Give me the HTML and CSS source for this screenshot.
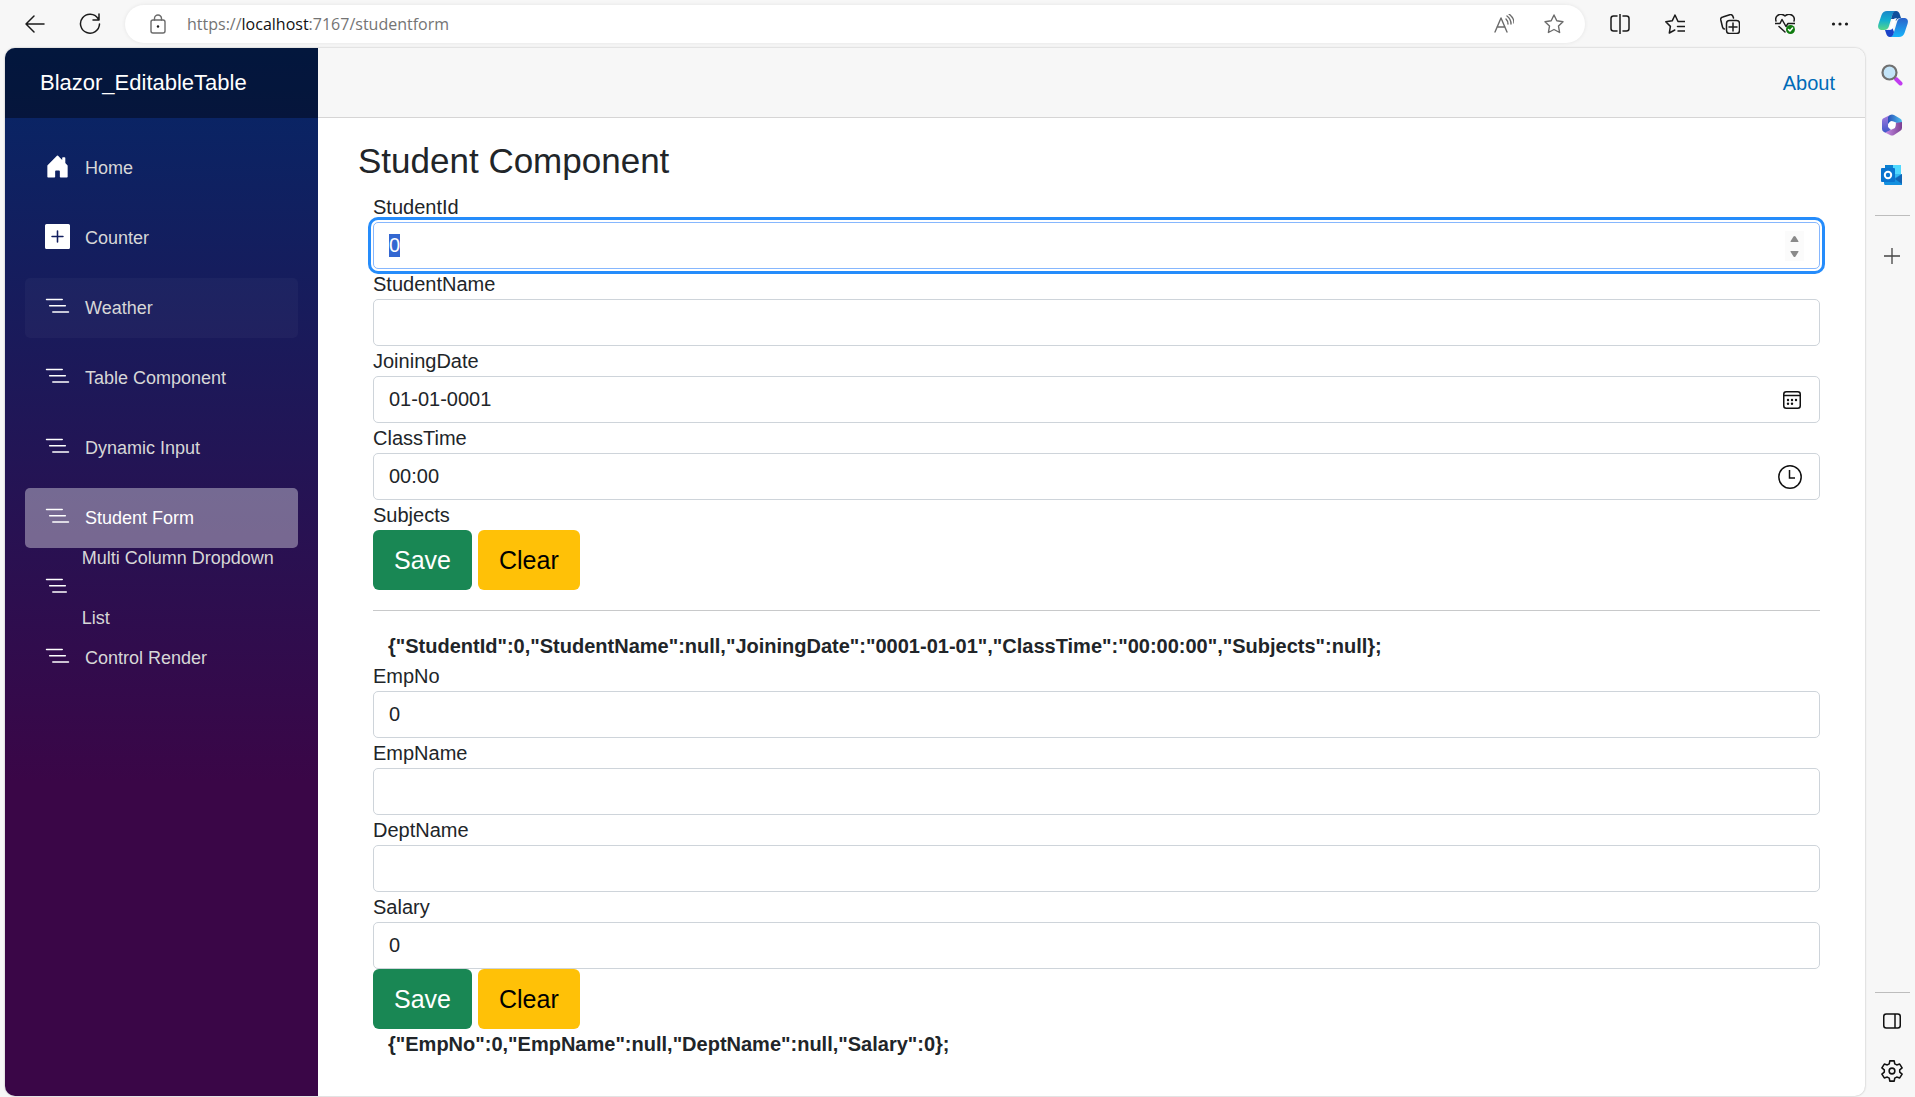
FILE: index.html
```html
<!DOCTYPE html>
<html lang="en">
<head>
<meta charset="utf-8">
<title>Student Form</title>
<link rel="stylesheet" href="styles.css">
</head>
<body>
<svg class="defs" aria-hidden="true">
  <symbol id="i-list" viewBox="0 0 16 16" preserveAspectRatio="xMinYMid slice"><path d="M4.500 11.500A.5.5 0 0 1 5 11h10a.5.5 0 0 1 0 1H5a.5.5 0 0 1-.5-.5zm-2-4A.5.5 0 0 1 3 7h10a.5.5 0 0 1 0 1H3a.5.5 0 0 1-.5-.5zm-2-4A.5.5 0 0 1 1 3h10a.5.5 0 0 1 0 1H1a.5.5 0 0 1-.5-.5z"/></symbol>
</svg>
<div class="browser">
  <header class="toolbar">
    <div class="tool-start">
      <button class="tool" aria-label="Back"><svg width="22" height="20" viewBox="0 0 22 20"><path d="M20 10H2M10 2L2 10l8 8"/></svg></button>
      <button class="tool" aria-label="Refresh"><svg width="22" height="22" viewBox="0 0 22 22"><path d="M19 5.500A9.500 9.500 0 1 0 20.500 11M20 1v6h-6"/></svg></button>
    </div>
    <div class="address">
      <svg class="lock" width="18" height="20" viewBox="0 0 18 20"><rect x="2" y="6" width="14" height="13" rx="2"/><path d="M5.500 6V4.500a3.500 3.500 0 0 1 7 0V6"/><circle cx="9" cy="12.500" r="1.200" class="solid"/></svg>
      <div class="url">https://<span class="host">localhost</span>:7167/studentform</div>
      <button class="tool muted" aria-label="Read aloud"><svg width="20" height="20" viewBox="0 0 20 20"><path d="M1 18L7 4l6 14M3 13h8M12 5q2 2 2 5M13 2q4 3 4 8M15 0q5 4 5 9"/></svg></button>
      <button class="tool muted" aria-label="Add to favorites"><svg width="20" height="20" viewBox="0 0 20 20"><path d="M10 1l2.800 5.800 6.200 .9-4.500 4.400 1.100 6.400L10 15.500l-5.600 3 1.100-6.400L1 7.700l6.200-.9z"/></svg></button>
    </div>
    <nav class="tool-end" aria-label="Browser tools">
      <button class="tool" aria-label="Split screen"><svg width="20" height="20" viewBox="0 0 20 20"><path d="M7 2H3.500Q1 2 1 4.500v10Q1 17 3.500 17H7M13 2h3.500Q19 2 19 4.500v10Q19 17 16.500 17H13M10 0v20"/></svg></button>
      <button class="tool" aria-label="Favorites"><svg width="20" height="20" viewBox="0 0 20 20"><path d="M13 7.500L10 1 7.200 6.800 .8 7.800l4.600 4.600L4.300 19l5.500-3M13 7.500h7M12.500 12.500H20M13 17h7"/></svg></button>
      <button class="tool" aria-label="Collections"><svg width="20" height="20" viewBox="0 0 20 20"><rect x="6.500" y="6.500" width="13" height="13" rx="3"/><path d="M13 9v8M9 13h8M4.500 15Q3 15 2.500 13L.8 6Q.3 3.500 2.800 3l7-2.300Q12.500 0 13.500 4"/></svg></button>
      <button class="tool" aria-label="Browser essentials"><svg width="20" height="20" viewBox="0 0 20 20"><path d="M1 7Q0 4 2 2q4-3.500 8 0 4-3.500 8 0 2 2 1 5M0 9.500h5l2-4 4 7 2-3h7M4 12.500l6 5.500"/><circle cx="15.500" cy="15.500" r="4.500" class="ok"/><path class="tick" d="M13.500 15.500l1.500 1.500 2.500-3"/></svg></button>
      <button class="tool" aria-label="Settings and more"><svg width="20" height="20" viewBox="0 0 20 20"><g class="solid"><circle cx="3.500" cy="10" r="1.600"/><circle cx="10" cy="10" r="1.600"/><circle cx="16.500" cy="10" r="1.600"/></g></svg></button>
    </nav>
    <button class="copilot" aria-label="Copilot"><svg width="30" height="28" viewBox="0 0 30 28">
      <defs>
        <linearGradient id="ca" x2="0" y2="1"><stop offset="0" stop-color="#1a86c8"/><stop offset=".5" stop-color="#14b0cf"/><stop offset="1" stop-color="#58d787"/></linearGradient>
        <linearGradient id="cb" x2="0" y2="1"><stop offset="0" stop-color="#2b62c9"/><stop offset="1" stop-color="#18b4fb"/></linearGradient>
      </defs>
      <path fill="url(#cb)" d="M21 27H12q3-1 4-5l3-10q1-4 5-4h3q4 1 2.500 6l-3 9q-1.500 4-5.500 4z"/>
      <path fill="#1a43c8" d="M7 20h3q3 0 4-3l2 5q-1 5-4 5-3 0-4-4z"/>
      <path fill="url(#ca)" d="M9 1h9q-3 1-4 5l-3 10q-1 4-5 4H3q-4-1-2.500-6l3-9Q5 1 9 1z"/>
      <path fill="#0f4f9c" d="M18 1q3 0 4 4l1 3q-4 0-5 3l-2-2h-3l1-3q1-5 4-5z"/>
      <path fill="#fff" d="M15 10q1-2 4-2-1 1-2 4l-2 6q-1 2-4 2 .5-1 1-3z"/>
    </svg></button>
  </header>

  <div class="workspace">
    <div class="page">
      <div class="sidebar">
        <div class="brand-row"><a class="brand" href="#">Blazor_EditableTable</a></div>
        <nav class="menu">
          <a class="item" href="#"><svg class="bi" viewBox="0 0 16 16"><path d="M6.500 14.500v-3.505c0-.245.25-.495.5-.495h2c.25 0 .5.25.5.5v3.500a.5.5 0 0 0 .5.5h4a.5.5 0 0 0 .5-.5v-7a.5.5 0 0 0-.146-.354L13 5.793V2.500a.5.5 0 0 0-.5-.5h-1a.5.5 0 0 0-.5.5v1.293L8.354 1.146a.5.5 0 0 0-.708 0l-6 6A.5.5 0 0 0 1.500 7.500v7a.5.5 0 0 0 .5.5h4a.5.5 0 0 0 .5-.5Z"/></svg>Home</a>
          <a class="item" href="#"><svg class="bi" viewBox="0 0 16 16"><path d="M1 0a1 1 0 0 0-1 1v14a1 1 0 0 0 1 1h14a1 1 0 0 0 1-1V1a1 1 0 0 0-1-1H1zm7.500 4.500v3h3a.5.5 0 0 1 0 1h-3v3a.5.5 0 0 1-1 0v-3h-3a.5.5 0 0 1 0-1h3v-3a.5.5 0 0 1 1 0z"/></svg>Counter</a>
          <a class="item hovered" href="#"><svg class="bi"><use href="#i-list"/></svg>Weather</a>
          <a class="item" href="#"><svg class="bi"><use href="#i-list"/></svg>Table Component</a>
          <a class="item" href="#"><svg class="bi"><use href="#i-list"/></svg>Dynamic Input</a>
          <a class="item active" href="#" aria-current="page"><svg class="bi"><use href="#i-list"/></svg>Student Form</a>
          <a class="item" href="#"><svg class="bi"><use href="#i-list"/></svg>Multi Column Dropdown List</a>
          <a class="item" href="#"><svg class="bi"><use href="#i-list"/></svg>Control Render</a>
        </nav>
      </div>
      <main class="main">
        <div class="top-row"><a class="about" href="#">About</a></div>
        <article class="content">
          <h3 class="title">Student Component</h3>
          <div class="forms">
            <form class="form">
              <label for="student-id">StudentId</label>
              <div class="field"><input class="control" id="student-id" type="number" value="0" autofocus>
                <svg class="spin" width="19" height="30" viewBox="0 0 19 30" aria-hidden="true"><path d="M5.500 11q0-1 .5-1.500l2.500-4q1-1 2 0l2.500 4q.5 .5 .5 1.500zM5.500 20h8q0 1-.5 1.500l-2.500 4q-1 1-2 0L6 21.500q-.5-.5-.5-1.500z"/></svg></div>
              <label for="student-name">StudentName</label>
              <div class="field"><input class="control" id="student-name" type="text"></div>
              <label for="joining-date">JoiningDate</label>
              <div class="field"><input class="control" id="joining-date" type="text" value="01-01-0001">
                <button class="picker" type="button" aria-label="Choose date"><svg width="18" height="18" viewBox="0 0 18 18"><rect x=".75" y=".75" width="16.500" height="16.500" rx="2.500"/><path d="M1 4.500h16"/><g class="solid"><circle cx="5" cy="9" r="1.200"/><circle cx="9" cy="9" r="1.200"/><circle cx="13" cy="9" r="1.200"/><circle cx="5" cy="12.700" r="1.200"/><circle cx="9" cy="12.700" r="1.200"/></g></svg></button></div>
              <label for="class-time">ClassTime</label>
              <div class="field"><input class="control" id="class-time" type="text" value="00:00">
                <button class="picker clock" type="button" aria-label="Choose time"><svg width="24" height="24" viewBox="0 0 24 24"><circle cx="12" cy="12" r="11.200"/><path d="M11.500 5v8H17"/></svg></button></div>
              <div class="caption">Subjects</div>
              <div class="actions"><button class="btn save" type="button">Save</button><button class="btn clear" type="button">Clear</button></div>
            </form>
            <hr class="rule">
            <div class="dump">{"StudentId":0,"StudentName":null,"JoiningDate":"0001-01-01","ClassTime":"00:00:00","Subjects":null};</div>
            <form class="form">
              <label for="emp-no">EmpNo</label>
              <div class="field"><input class="control" id="emp-no" type="number" value="0"></div>
              <label for="emp-name">EmpName</label>
              <div class="field"><input class="control" id="emp-name" type="text"></div>
              <label for="dept-name">DeptName</label>
              <div class="field"><input class="control" id="dept-name" type="text"></div>
              <label for="salary">Salary</label>
              <div class="field"><input class="control" id="salary" type="number" value="0"></div>
              <div class="actions"><button class="btn save" type="button">Save</button><button class="btn clear" type="button">Clear</button></div>
            </form>
            <div class="dump">{"EmpNo":0,"EmpName":null,"DeptName":null,"Salary":0};</div>
          </div>
        </article>
      </main>
    </div>

    <aside class="rail" aria-label="Browser sidebar">
      <div class="rail-group">
        <button class="rail-btn" aria-label="Search"><svg width="22" height="22" viewBox="0 0 22 22">
          <path d="M15 15l4.500 4.500" stroke="#c13cf0" stroke-width="4" stroke-linecap="round"/><circle cx="8.500" cy="8.500" r="7" fill="#c3e4f8" stroke="#707070" stroke-width="2.200"/></svg></button>
        <button class="rail-btn" aria-label="Microsoft 365"><svg width="22" height="22" viewBox="0 0 22 22">
          <defs><linearGradient id="ma" x2="1"><stop offset="0" stop-color="#2a50b8"/><stop offset="1" stop-color="#4cc0f0"/></linearGradient><linearGradient id="mb" x2="0" y2="1"><stop offset="0" stop-color="#a87be0"/><stop offset="1" stop-color="#3b57c8"/></linearGradient><linearGradient id="mc" x2="1"><stop offset="0" stop-color="#c890e8"/><stop offset="1" stop-color="#7a3f92"/></linearGradient></defs>
          <path fill="url(#mb)" d="M9 1L2 4.500Q1 5 1 7v8q0 2 2 3l2 1 5-3-3-3V7z"/><path fill="url(#ma)" d="M9 1q2-1 4 0l6 3.500Q21 5 21 8v4l-7-4-4-1-3 3V3z"/><path fill="url(#mc)" d="M21 8v6q0 2-2 3l-6 4q-2 1-4 0l-5-2.500L14 14l1-5z"/><circle cx="11" cy="11" r="3.500" fill="#fff"/></svg></button>
        <button class="rail-btn" aria-label="Outlook"><svg width="22" height="22" viewBox="0 0 22 22">
          <path fill="#35b8f1" d="M4 1h16v14H4z"/><path fill="#0a7fd0" d="M4 1h8v5H4z"/><path fill="#50d9ff" d="M12 1h8v9h-8z"/><path fill="#1490df" d="M3 11l9 4 9-5v11H4q-1 0-1-2z"/><path fill="#1265b5" d="M21 10v10l-7-5z"/><rect y="4" width="14" height="14" rx="1" fill="#0a74cf"/><circle cx="7" cy="11" r="3.200" fill="none" stroke="#fff" stroke-width="2"/></svg></button>
      </div>
      <hr class="rail-rule">
      <button class="rail-btn" aria-label="Customize"><svg width="16" height="16" viewBox="0 0 16 16" stroke="#444" stroke-width="1.300"><path d="M8 0v16M0 8h16"/></svg></button>
      <hr class="rail-rule push">
      <div class="rail-group end">
        <button class="rail-btn" aria-label="Hide sidebar"><svg width="18" height="16" viewBox="0 0 18 16" fill="none" stroke="#111" stroke-width="1.500"><rect x=".75" y="1" width="16.500" height="14" rx="2.500"/><path d="M12 1v14"/></svg></button>
        <button class="rail-btn" aria-label="Settings"><svg width="22" height="22" viewBox="0 0 20 20" fill="none" stroke="#111" stroke-width="1.400" stroke-linejoin="round"><circle cx="10" cy="10" r="2.600"/><path d="M8 .8h4l.5 2.700 1.800 1L17 3.700l2.200 3.500L17 9v2l2.200 1.800-2.200 3.500-2.700-.8-1.800 1-.5 2.700H8l-.5-2.700-1.800-1-2.700 .8-2.200-3.500L3 11V9L.8 7.200 3 3.700l2.700 .8 1.800-1z"/></svg></button>
      </div>
    </aside>
  </div>
</div>
<script>
  const first = document.getElementById('student-id');
  first.focus();
  first.select();
</script>
</body>
</html>
```
FILE: styles.css
```css
* { box-sizing: border-box; }

body {
  margin: 0;
  background: #f7f7f7;
  color: #212529;
  font: 20px/30px "Liberation Sans", Arial, sans-serif;
}

button { border: 0; padding: 0; background: none; font: inherit; color: inherit; }
a { text-decoration: none; }
svg { display: block; }
.defs { position: absolute; width: 0; height: 0; }

.browser { display: flex; flex-direction: column; min-height: 100vh; }

/* Browser toolbar */
.toolbar { display: flex; align-items: center; height: 48px; }
.tool svg, .lock { fill: none; stroke: #1b1b1b; stroke-width: 1.5; stroke-linejoin: round; stroke-linecap: round; }
.tool svg .solid, .lock .solid { fill: #1b1b1b; stroke: none; }
.tool svg .ok { fill: #107c10; stroke: none; }
.tool svg .tick { stroke: #fff; }
.tool.muted svg, .lock { stroke: #6b6b6b; stroke-width: 1.4; }
.tool-start { display: flex; gap: 33px; width: 125px; padding-left: 24px; }
.address {
  display: flex;
  flex: 1;
  align-items: center;
  height: 38px;
  padding: 0 21px 0 24px;
  border-radius: 19px;
  background: #fff;
  box-shadow: 0 0 4px rgba(0, 0, 0, .08);
}
.url { flex: 1; margin-left: 20px; color: #747474; font: 16px/24px "Open Sans", "Noto Sans", sans-serif; }
.host { color: #111; }
.address .tool + .tool { margin-left: 30px; }
.tool-end { display: flex; gap: 35px; padding: 0 28px 0 25px; }
.copilot { width: 37px; }

/* Page frame */
.workspace { display: flex; flex: 1; padding: 0 0 1px 5px; }
.page {
  display: flex;
  flex: 1;
  overflow: hidden;
  border-radius: 10px;
  background: #fff;
  box-shadow: 0 0 2px rgba(0, 0, 0, .3);
}

/* Application sidebar */
.sidebar { flex: 0 0 313px; background: linear-gradient(180deg, #052767 0%, #3a0647 70%); }
.brand-row { display: flex; align-items: center; height: 70px; padding-left: 35px; background: rgba(0, 0, 0, .4); }
.brand { color: #fff; font-size: 22px; }
.menu { display: flex; flex-direction: column; gap: 10px; padding: 20px 20px 0; }
.item {
  display: flex;
  align-items: center;
  height: 60px;
  padding: 0 20px;
  border-radius: 5px;
  color: #d7d7d7;
  font-size: 18px;
  line-height: 60px;
}
.item.hovered { background: rgba(255, 255, 255, .03); }
.item.active { background: rgba(255, 255, 255, .37); color: #fff; }
.bi { width: 25px; height: 25px; min-width: 0; margin: 0 15px 3px 0; fill: #fff; }

/* Application content */
.main { flex: 1; min-width: 0; }
.top-row {
  display: flex;
  align-items: center;
  justify-content: flex-end;
  height: 70px;
  padding-right: 30px;
  border-bottom: 1px solid #d6d5d5;
  background: #f7f7f7;
}
.about { color: #006bb7; }
.content { padding: 22px 30px 30px 40px; }
.title { margin: 0 0 10px; font-size: 35px; font-weight: 400; line-height: 42px; }
.forms { padding: 0 15px; }
.form label, .caption { display: block; height: 30px; }
.field { position: relative; }
.control {
  display: block;
  width: 100%;
  height: 47px;
  padding: 0 15px;
  border: 1px solid #ced4da;
  border-radius: 5px;
  background: #fff;
  color: #212529;
  font: inherit;
  appearance: none;
}
.control[type="number"] { appearance: textfield; }
.control::-webkit-inner-spin-button { appearance: none; margin: 0; }
.control:focus {
  border-color: #86b7fe;
  outline: 0;
  box-shadow: 0 0 0 2px #fff, 0 0 0 5px #258cfb;
}
.control::selection { background: #3367d1; color: #fff; }
.spin, .picker { position: absolute; top: 0; bottom: 0; right: 16px; margin: auto 0; }
.spin { background: #fbfbfb; fill: #8a8a8a; }
.picker { right: 19px; }
.picker svg { fill: none; stroke: #111; stroke-width: 1.5; }
.picker .solid { fill: #111; stroke: none; }
.picker.clock { right: 18px; }
.actions { display: flex; gap: 6px; }
.btn { height: 60px; padding: 0 21px; border-radius: 6px; font-size: 25px; line-height: 38px; }
.save { background: #198754; color: #fff; }
.clear { background: #ffc107; color: #000; }
.rule { height: 1px; margin: 20px 0; border: 0; background: #c8c9ca; }
.dump { padding: 0 15px; font-weight: 700; }

/* Browser side rail */
.rail { display: flex; flex-direction: column; align-items: center; width: 50px; padding: 12px 0 10px 4px; }
.rail-group { display: flex; flex-direction: column; gap: 20px; }
.rail-btn { display: grid; place-items: center; width: 30px; height: 30px; }
.rail-rule { width: 35px; height: 1px; margin: 25px 0; border: 0; background: #bdbdbd; }
.rail-rule.push { margin: auto 0 13px; }
```
